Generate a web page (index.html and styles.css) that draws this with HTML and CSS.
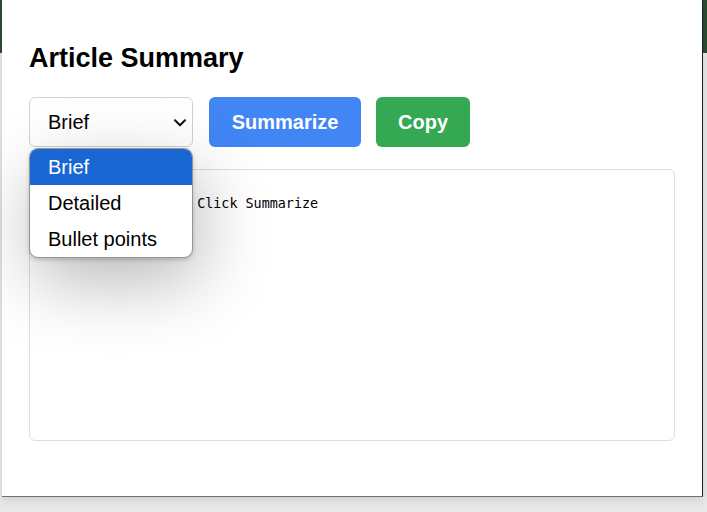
FILE: index.html
```html
<!DOCTYPE html>
<html lang="en">
<head>
<meta charset="utf-8">
<title>Article Summary</title>
<link rel="stylesheet" href="styles.css">
</head>
<body>
<div class="window">
  <h1 class="title">Article Summary</h1>
  <div class="controls">
    <div class="select-wrap">
      <div class="select">
        <span class="select-value">Brief</span>
        <svg class="chevron" width="12" height="8" viewBox="0 0 12 8" aria-hidden="true"><path d="M1 1.2 L6 6.2 L11 1.2" fill="none" stroke="#111" stroke-width="2" stroke-linecap="round" stroke-linejoin="round"/></svg>
      </div>
      <ul class="menu">
        <li class="option selected">Brief</li>
        <li class="option">Detailed</li>
        <li class="option">Bullet points</li>
      </ul>
    </div>
    <button class="btn btn-blue">Summarize</button>
    <button class="btn btn-green">Copy</button>
  </div>
  <div class="output">Pick a style, then Click Summarize</div>
</div>
</body>
</html>
```
FILE: styles.css
```css
html, body {
  margin: 0;
  padding: 0;
}
body {
  width: 707px;
  height: 512px;
  overflow: hidden;
  background: linear-gradient(#2d4c33 0, #2d4c33 53px, #e9e9e9 53px);
  font-family: "Liberation Sans", Arial, sans-serif;
}
.window {
  margin-left: 2px;
  width: 701px;
  height: 497px;
  box-sizing: border-box;
  background: #fff;
  border-right: 1px solid #1b211c;
  border-bottom: 1px solid #707070;
  box-shadow: 0 3px 10px rgba(0, 0, 0, 0.12);
  padding: 45px 27px 0 27px;
}
.title {
  margin: 0;
  font-size: 27px;
  line-height: 27px;
  font-weight: bold;
  color: #000;
}
.controls {
  margin-top: 25px;
  display: flex;
  gap: 16px;
  height: 50px;
}
.select-wrap {
  position: relative;
  width: 164px;
}
.select {
  box-sizing: border-box;
  height: 50px;
  border: 1px solid #d2d2d2;
  border-radius: 6px;
  background: #fff;
  display: flex;
  align-items: center;
  justify-content: space-between;
  padding: 0 6px 0 18px;
  font-size: 20px;
  color: #000;
}
.chevron {
  margin-top: 1px;
}
.menu {
  position: absolute;
  left: 0;
  top: 51px;
  width: 162px;
  margin: 0;
  padding: 0;
  list-style: none;
  background: #fff;
  border: 1px solid #959595;
  border-radius: 9px;
  overflow: hidden;
  box-shadow: 0 2px 4px rgba(0, 0, 0, 0.18), 6px 24px 70px rgba(0, 0, 0, 0.28);
  z-index: 2;
}
.option {
  height: 36px;
  line-height: 36px;
  padding-left: 18px;
  font-size: 20px;
  color: #000;
}
.option.selected {
  background: #1a66d2;
  color: #fff;
}
.btn {
  height: 50px;
  border: 0;
  border-radius: 6px;
  padding: 0 22px;
  font-family: "Liberation Sans", Arial, sans-serif;
  font-size: 20px;
  font-weight: bold;
  color: #fff;
}
.btn-blue {
  width: 152px;
  background: #4285f4;
}
.btn-green {
  width: 94px;
  background: #34a853;
  margin-left: -1px;
}
.output {
  margin-top: 22px;
  height: 272px;
  box-sizing: border-box;
  border: 1px solid #dddddd;
  border-radius: 6px;
  padding: 26px 14px;
  font-family: "DejaVu Sans Mono", monospace;
  font-size: 13.4px;
  color: #000;
  white-space: pre-wrap;
}
```
